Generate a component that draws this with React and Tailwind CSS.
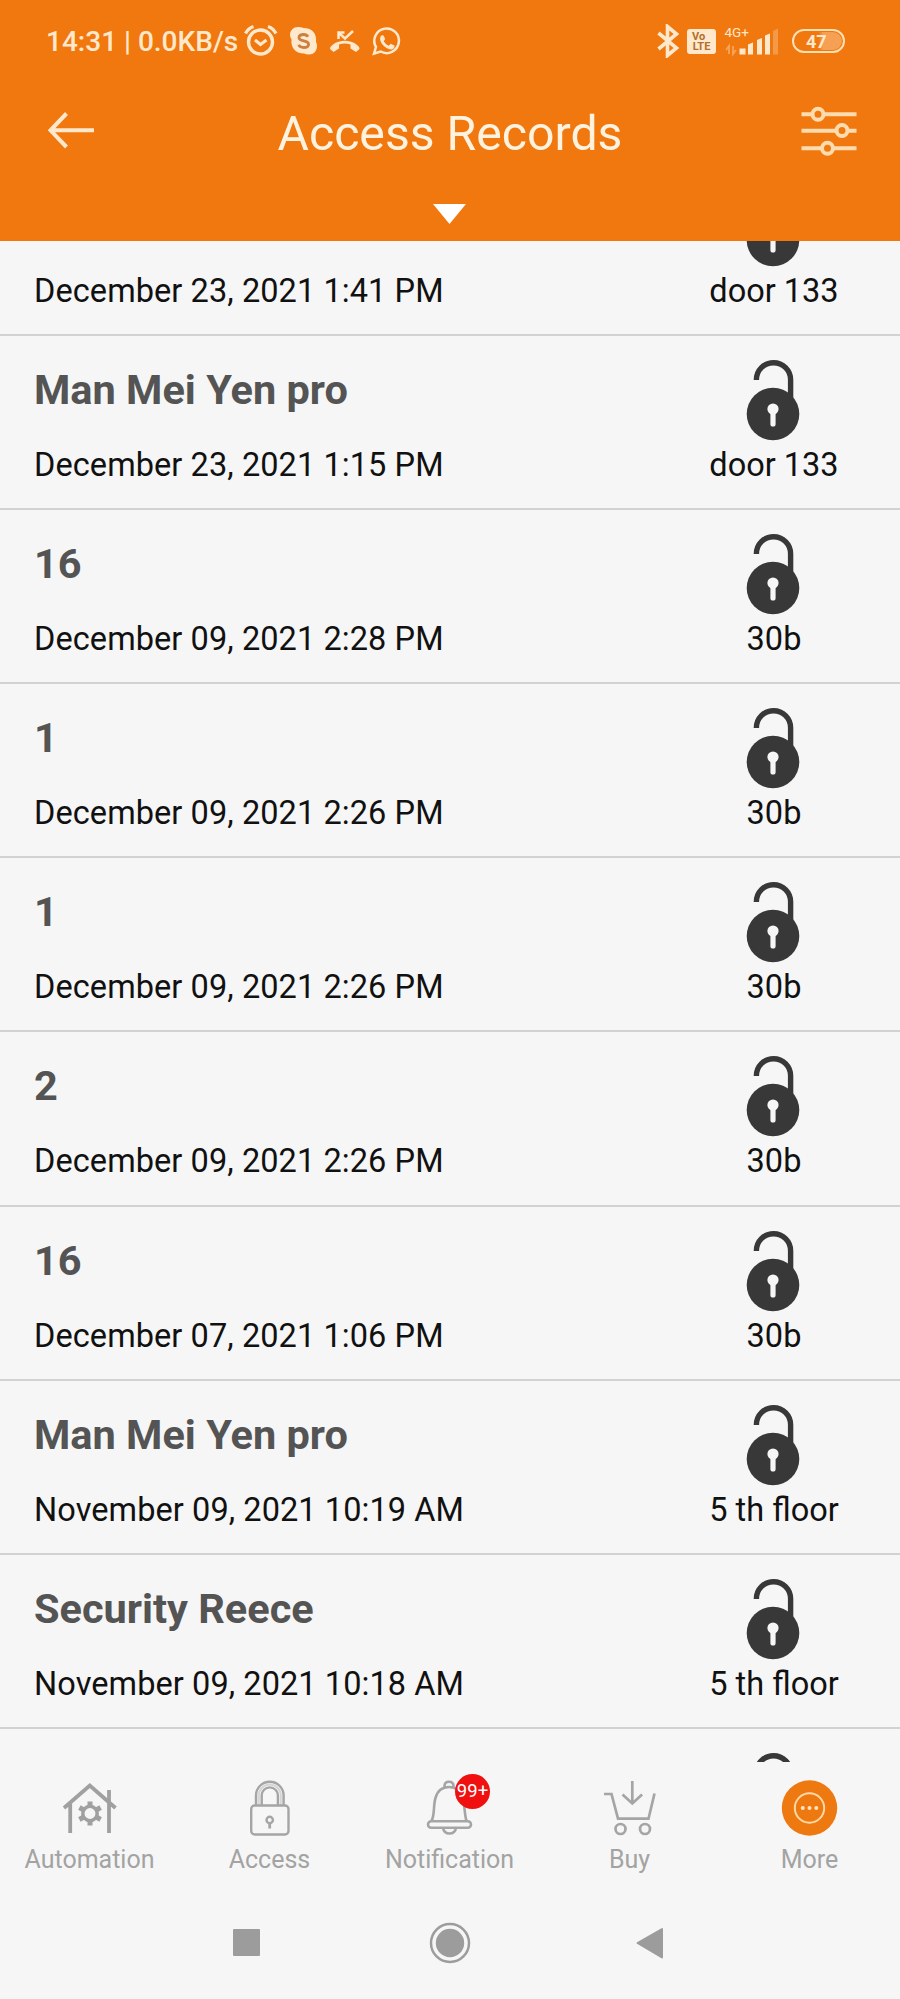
import React from "react";

const records = [
  { name: "", date: "December 23, 2021 1:41 PM", place: "door 133" },
  { name: "Man Mei Yen pro", date: "December 23, 2021 1:15 PM", place: "door 133" },
  { name: "16", date: "December 09, 2021 2:28 PM", place: "30b" },
  { name: "1", date: "December 09, 2021 2:26 PM", place: "30b" },
  { name: "1", date: "December 09, 2021 2:26 PM", place: "30b" },
  { name: "2", date: "December 09, 2021 2:26 PM", place: "30b" },
  { name: "16", date: "December 07, 2021 1:06 PM", place: "30b" },
  { name: "Man Mei Yen pro", date: "November 09, 2021 10:19 AM", place: "5 th floor" },
  { name: "Security Reece", date: "November 09, 2021 10:18 AM", place: "5 th floor" },
  { name: "", date: "", place: "" },
];

function OpenLock() {
  return (
    <svg viewBox="746 360 54 82" className="h-[82px] w-[54px]" fill="none">
      <path d="M756.4 380v-.2a17.1 17.1 0 0 1 34.2 0V398" stroke="#383838" strokeWidth="5.4" />
      <circle cx="773" cy="414" r="26.3" fill="#383838" />
      <circle cx="773" cy="409" r="5.6" fill="#f6f6f6" />
      <path d="M773 410v14" stroke="#f6f6f6" strokeWidth="5.2" strokeLinecap="round" />
    </svg>
  );
}

function Record({ name, date, place }) {
  return (
    <li className="flex h-[174.1px] shrink-0 border-b-2 border-[#d2d2d2]">
      <div className="flex flex-1 flex-col pl-[34px] pt-[30px]">
        <span className="h-[48px] text-[41.5px] leading-[48px] font-bold text-[#545454]">{name}</span>
        <span className="mt-[32px] text-[32.5px] leading-[38px] tracking-[0.08px] whitespace-nowrap text-[#111]">{date}</span>
      </div>
      <div className="flex w-[254px] flex-col items-center pt-[24px]">
        <OpenLock />
        <span className="mt-[4px] pl-[2px] text-[32.5px] leading-[38px] whitespace-nowrap text-[#111]">{place}</span>
      </div>
    </li>
  );
}

function StatusBar() {
  return (
    <div className="flex h-[82px] pt-[24px] text-[#ffe8cb]">
      <span className="ml-[46px] w-[198px] text-[28px] leading-[36px] font-medium whitespace-nowrap">14:31 | 0.0KB/s</span>
      <svg viewBox="244 24 160 34" className="h-[34px] w-[160px]" fill="none" stroke="currentColor">
        <circle cx="260.5" cy="42" r="12" strokeWidth="3.4" />
        <path d="M255 40l5.5 4.500l6-4.500" strokeWidth="3" />
        <path d="M245.500 33.500q2.500-5 8-7M268 26.500q5.500 2 8 7" strokeWidth="3.200" />
        <path d="M298 27q3.500 0 5.500 1c9 0 13.500 6 12.500 14q1 1.500 1 4c0 5-3.500 8.500-8 8.500q-3 0-5-1c-8.500 0-13.500-6-12.500-14q-1.500-2-1.500-4.500c0-4.500 3.500-8 8-8z" fill="currentColor" stroke="none" />
        <path d="M308 36.800q-1.300-2.300-4.300-2.300c-3 0-4.700 1.300-4.700 3.200 0 4.300 9.600 2 9.600 6.500 0 2-2 3.300-4.900 3.300q-3.600 0-5.100-2.600" stroke="#c98142" strokeWidth="2.800" />
        <path d="M330 49q0-2.500 3-4.500c6.500-5 17-5 23.500 0q3 2 3 4.500l-3.500 3-5.500-3.500v-4q-6-2-11.500 0v4l-5.500 3.500z" fill="currentColor" stroke="none" />
        <path d="M338.500 39v-6.500h6M339 33l6 5.500 8-7.500" strokeWidth="2.500" />
        <path d="M374 53.500l2-6.500a12.300 12.300 0 1 1 4.600 4.500z" strokeWidth="2.500" />
        <path d="M380.500 36.500q1.500-2 3-1l1.700 3.500-1.500 2.200q1.800 3.300 5 4.600l2-2 3.700 1.800q.6 2.500-2 3.700c-3 1.200-10-2.500-12-8.500q-.6-2.500.1-4.300z" fill="currentColor" stroke="none" />
      </svg>
      <svg viewBox="656 24 24 34" className="ml-[252px] h-[34px] w-[24px]" fill="none" stroke="currentColor" strokeWidth="3.600">
        <path d="M658.500 33l18 15-9 7.500v-29l9 7.500-18 15" />
      </svg>
      <div className="mt-[5px] ml-[7px] flex h-[25px] w-[29px] flex-col items-center justify-center rounded-[3px] bg-[#ffe8cb] text-[11px] leading-[10px] font-bold text-[#b0702f]">
        <span className="self-start pl-[5px]">Vo</span>
        <span>LTE</span>
      </div>
      <svg viewBox="724 24 60 34" className="ml-[8px] h-[34px] w-[60px]" fill="currentColor">
        <text x="724.500" y="36.500" fontSize="13.500" fontFamily="Roboto, sans-serif">4G+</text>
        <path d="M739.500 48.500h6v6h-6zM748 44.500l5-2v12h-5zM757 40l5-2v16.500h-5zM765 35.500l5-2v21h-5z" />
        <path d="M773 31l5-2.500v26h-5z" opacity=".3" />
        <path d="M726 50l3-4v8M733 46v8l3-4" opacity=".4" stroke="currentColor" fill="none" strokeWidth="1.800" />
      </svg>
      <div className="mt-[5px] ml-[8px] flex h-[24px] w-[53px] rounded-full border-[2.5px] border-[#ffe0b4] p-px">
        <div className="flex flex-1 items-center rounded-full bg-linear-to-r from-transparent from-50% to-[#f5a052] to-60% pl-[11px] text-[18px] leading-[17px] font-bold">47</div>
      </div>
    </div>
  );
}

function Header() {
  return (
    <header className="z-10 h-[241px] shrink-0 bg-[#f0780f]">
      <StatusBar />
      <div className="flex h-[100px] pt-[20px]">
        <svg viewBox="46 102 50 56" className="ml-[46px] h-[56px] w-[50px]" fill="none" stroke="#ffe8cb" strokeWidth="4">
          <path d="M94 130.300H51M66.500 113.500L50.500 130.300L66.500 147" />
        </svg>
        <h1 className="flex-1 pt-[2px] pl-[4px] text-center text-[48.2px] leading-[60px] font-normal text-[#fff3e0]">Access Records</h1>
        <svg viewBox="800 102 58 56" className="mr-[42px] h-[56px] w-[58px]" fill="#f0780f" stroke="#ffdcaf" strokeWidth="4">
          <path d="M801.500 114.200H856.500M801.500 130.800H856.500M801.500 148.300H856.500" />
          <circle cx="818" cy="114.200" r="5.500" />
          <circle cx="842" cy="130.500" r="5.500" />
          <circle cx="827.500" cy="148.300" r="5.500" />
        </svg>
      </div>
      <svg viewBox="0 0 34 22" className="mx-auto mt-[22px] h-[22px] w-[34px]">
        <path d="M0 0H33L16.500 20z" fill="#fff" />
      </svg>
    </header>
  );
}

function HouseIcon() {
  return (
    <svg viewBox="60 1778 60 60" className="h-[60px] w-[60px]" fill="none" stroke="#a0a0a0" strokeWidth="3.800">
      <path d="M64 1808L89.800 1785.500L115.500 1808M70.200 1804V1833M109 1790V1833" />
      <circle cx="90" cy="1813.500" r="7.200" strokeWidth="3.500" />
      <path d="M90 1806v-4.500M90 1821v4.500M83.700 1810l-4.300-2.500M96.300 1810l4.300-2.500M83.700 1817l-4.300 2.500M96.300 1817l4.300 2.500" strokeWidth="5" />
    </svg>
  );
}

function LockIcon() {
  return (
    <svg viewBox="240 1778 60 60" className="h-[60px] w-[60px]" fill="none" stroke="#a5a5a5" strokeWidth="2.400">
      <rect x="251.200" y="1805.500" width="37.300" height="29" rx="3.500" />
      <path d="M256 1805v-9.500a13.800 13.800 0 0 1 27.600 0v9.500M261.700 1805v-9.500a8.100 8.100 0 0 1 16.200 0v9.500" />
      <path d="M258.800 1805v-9.500a11 11 0 0 1 22 0v9.500" strokeWidth="2" opacity=".4" />
      <circle cx="269.700" cy="1820" r="3.200" />
      <path d="M269.700 1823v5.500" strokeWidth="2.800" />
    </svg>
  );
}

function BellIcon() {
  return (
    <svg viewBox="420 1778 60 60" className="h-[60px] w-[60px]" fill="none" stroke="#a5a5a5" strokeWidth="2.600">
      <path d="M444.500 1787.500v-1.500q0-4.300 4.500-4.300t4.500 4.300v1.500M431.500 1821c3.500-6 1.500-15 4-23 2-7.500 7-11 13.500-11s11.500 3.500 13.500 11c2.500 8 2 17 4 23" />
      <rect x="428" y="1821.200" width="43" height="6.500" rx="3.250" />
      <path d="M443 1828q1 5.500 6.500 5.500t6.500-5.500" />
    </svg>
  );
}

function CartIcon() {
  return (
    <svg viewBox="600 1778 60 60" className="h-[60px] w-[60px]" fill="none" stroke="#a5a5a5" strokeWidth="2.700">
      <path d="M604 1794h7.500L618 1818.700h30.500L654.500 1793.500M632.300 1781v22M622.500 1794.500l9.800 9 9.800-9" />
      <circle cx="620.500" cy="1829" r="5" />
      <circle cx="645" cy="1829" r="5" />
    </svg>
  );
}

function MoreIcon() {
  return (
    <svg viewBox="780 1778 60 60" className="h-[60px] w-[60px]">
      <circle cx="809.500" cy="1808" r="27.700" fill="#ee7910" />
      <circle cx="809.500" cy="1808" r="14.700" fill="none" stroke="#ffd9a5" strokeWidth="2" />
      <path d="M802.700 1808h.01M809.500 1808h.01M816.300 1808h.01" stroke="#ffe3bd" strokeWidth="4" strokeLinecap="round" />
    </svg>
  );
}

const tabs = [
  { label: "Automation", Icon: HouseIcon },
  { label: "Access", Icon: LockIcon },
  { label: "Notification", Icon: BellIcon, badge: "99+" },
  { label: "Buy", Icon: CartIcon },
  { label: "More", Icon: MoreIcon },
];

export default function App() {
  return (
    <div className="flex h-[1999px] w-[900px] flex-col overflow-hidden bg-[#f6f6f6] font-[Roboto,sans-serif]">
      <Header />
      <main className="h-[1521px] shrink-0 overflow-hidden">
        <ul className="-mt-[79px] flex flex-col">
          {records.map((r, i) => (
            <Record key={i} {...r} />
          ))}
        </ul>
      </main>
      <nav className="grid h-[132px] shrink-0 grid-cols-5 pt-[16px]">
        {tabs.map(({ label, Icon, badge }) => (
          <div key={label} className="relative flex flex-col items-center">
            <Icon />
            {badge && (
              <span className="absolute top-[-4px] left-[95px] flex size-[35px] items-center justify-center rounded-full bg-[#f01010] text-[18.5px] leading-none text-white">
                {badge}
              </span>
            )}
            <span className="mt-[7px] mr-px text-[25px] leading-[30px] text-[#a3a3a3]">{label}</span>
          </div>
        ))}
      </nav>
      <footer className="flex h-[97px] items-center">
        <div className="ml-[233px] size-[27px] rounded-[1px] bg-[#9c9c9c]" />
        <svg viewBox="429 1921 42 42" className="ml-[169px] h-[42px] w-[42px]">
          <circle cx="450" cy="1942" r="19" fill="none" stroke="#9c9c9c" strokeWidth="2.500" />
          <circle cx="450" cy="1942" r="14.200" fill="#9c9c9c" />
        </svg>
        <svg viewBox="636 1926 28 32" className="ml-[165px] h-[32px] w-[28px]">
          <path d="M637.500 1942L662 1928V1956.500z" fill="#9c9c9c" stroke="#9c9c9c" strokeWidth="2" strokeLinejoin="round" />
        </svg>
      </footer>
    </div>
  );
}
